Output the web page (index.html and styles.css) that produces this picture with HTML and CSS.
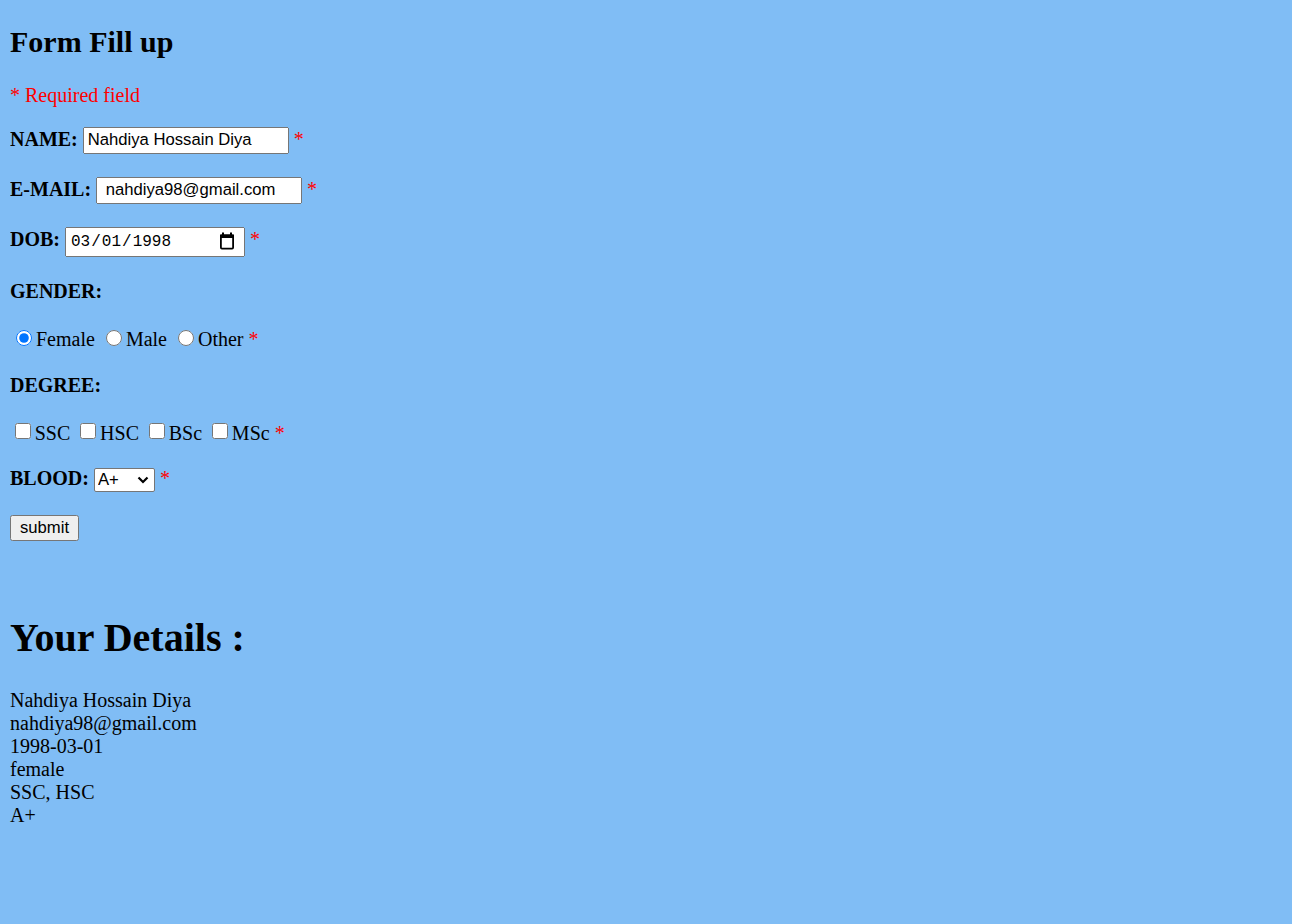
FILE: index.html
```html
<!DOCTYPE html>
<html>
<head>
<meta charset="utf-8">
<title>Form Fill up</title>
<link rel="stylesheet" href="styles.css">
</head>
<body class="page">
<h2 class="title">Form Fill up</h2>
<p class="note"><span class="error">* Required field</span></p>
<form class="form">
<b class="label">NAME:</b> <input class="text-input" type="text" name="name" value="Nahdiya Hossain Diya"> <span class="error">*</span>
<br><br>
<b class="label">E-MAIL:</b> <input class="text-input" type="text" name="email" value=" nahdiya98@gmail.com"> <span class="error">*</span>
<br><br>
<b class="label">DOB:</b> <span class="date-wrap"><input class="date-input" type="date" name="dob" value="1998-03-01"><svg class="date-icon" width="16" height="18" viewBox="0 0 16 18"><rect x="3" y="0.5" width="2" height="3" fill="#000"/><rect x="11" y="0.5" width="2" height="3" fill="#000"/><rect x="1" y="2.5" width="14" height="3.5" fill="#000"/><rect x="1.9" y="3.4" width="12.2" height="13.2" rx="1" fill="none" stroke="#000" stroke-width="1.8"/></svg></span> <span class="error">*</span>
<br><br>
<b class="label">GENDER:</b>
<br><br>
<input class="radio" type="radio" name="gender" value="female" checked>Female
<input class="radio" type="radio" name="gender" value="male">Male
<input class="radio" type="radio" name="gender" value="other">Other
<span class="error">*</span>
<br><br>
<b class="label">DEGREE:</b>
<br><br>
<input class="check" type="checkbox" name="degree" value="SSC">SSC
<input class="check" type="checkbox" name="degree" value="HSC">HSC
<input class="check" type="checkbox" name="degree" value="BSc">BSc
<input class="check" type="checkbox" name="degree" value="MSc">MSc
<span class="error">*</span>
<br><br>
<b class="label">BLOOD:</b> <span class="select-wrap"><select class="select" name="blood">
<option>A+</option>
<option>A-</option>
<option>B+</option>
<option>B-</option>
<option>AB+</option>
<option>AB-</option>
<option>O+</option>
<option>O-</option>
</select><svg class="select-arrow" width="12" height="8" viewBox="0 0 12 8"><path d="M1.5 1.5 L6 6 L10.5 1.5" fill="none" stroke="#000" stroke-width="2.2"/></svg></span> <span class="error">*</span>
<br><br>
<input class="submit" type="submit" name="submit" value="submit">
<br><br><br>
</form>
<h1 class="details-title">Your Details :</h1>
<div class="details">Nahdiya Hossain Diya<br>nahdiya98@gmail.com<br>1998-03-01<br>female<br>SSC, HSC<br>A+</div>
</body>
</html>
```

FILE: styles.css
```css
html {
  background: #80bdf5;
}

.page {
  margin: 0 10px 10px;
  font-family: "Liberation Serif", "Times New Roman", serif;
  font-size: 20px;
  color: #000;
}

.title {
  font-size: 30px;
  font-weight: bold;
  margin: 24.9px 0;
}

.note {
  margin: 20px 0;
}

.error {
  color: #ff0000;
}

.label {
  font-weight: bold;
}

.text-input {
  box-sizing: border-box;
  width: 206px;
  height: 27px;
  padding: 1px 3px;
  font-family: "Liberation Sans", Arial, sans-serif;
  font-size: 16.67px;
  color: #000;
}

.date-wrap {
  position: relative;
  display: inline-block;
}

.date-input {
  box-sizing: border-box;
  width: 180px;
  height: 30px;
  padding: 1px 3px;
  font-family: "Liberation Mono", "Courier New", monospace;
  font-size: 16px;
  color: #000;
}

.date-input::-webkit-calendar-picker-indicator {
  opacity: 0;
}

.date-icon {
  position: absolute;
  right: 10px;
  top: 5px;
  pointer-events: none;
}

.radio {
  width: 16px;
  height: 16px;
  margin: 3.75px 3.75px 0 6.25px;
}

.check {
  width: 16px;
  height: 16px;
  margin: 3.75px 3.75px 3.75px 5px;
}

.select-wrap {
  position: relative;
  display: inline-block;
}

.select {
  box-sizing: border-box;
  width: 61px;
  height: 24px;
  padding: 0 3px;
  appearance: none;
  -webkit-appearance: none;
  background: #fff;
  border: 1px solid #767676;
  border-radius: 2px;
  font-family: "Liberation Sans", Arial, sans-serif;
  font-size: 16.67px;
  color: #000;
}

.select-arrow {
  position: absolute;
  right: 6px;
  top: 9px;
  pointer-events: none;
}

.submit {
  box-sizing: border-box;
  width: 69px;
  height: 26px;
  padding: 1px 7px;
  font-family: "Liberation Sans", Arial, sans-serif;
  font-size: 16.67px;
  color: #000;
}

.details-title {
  font-size: 40px;
  font-weight: bold;
  margin: 26.8px 0 28.8px;
}

.details {
  line-height: normal;
}
```
